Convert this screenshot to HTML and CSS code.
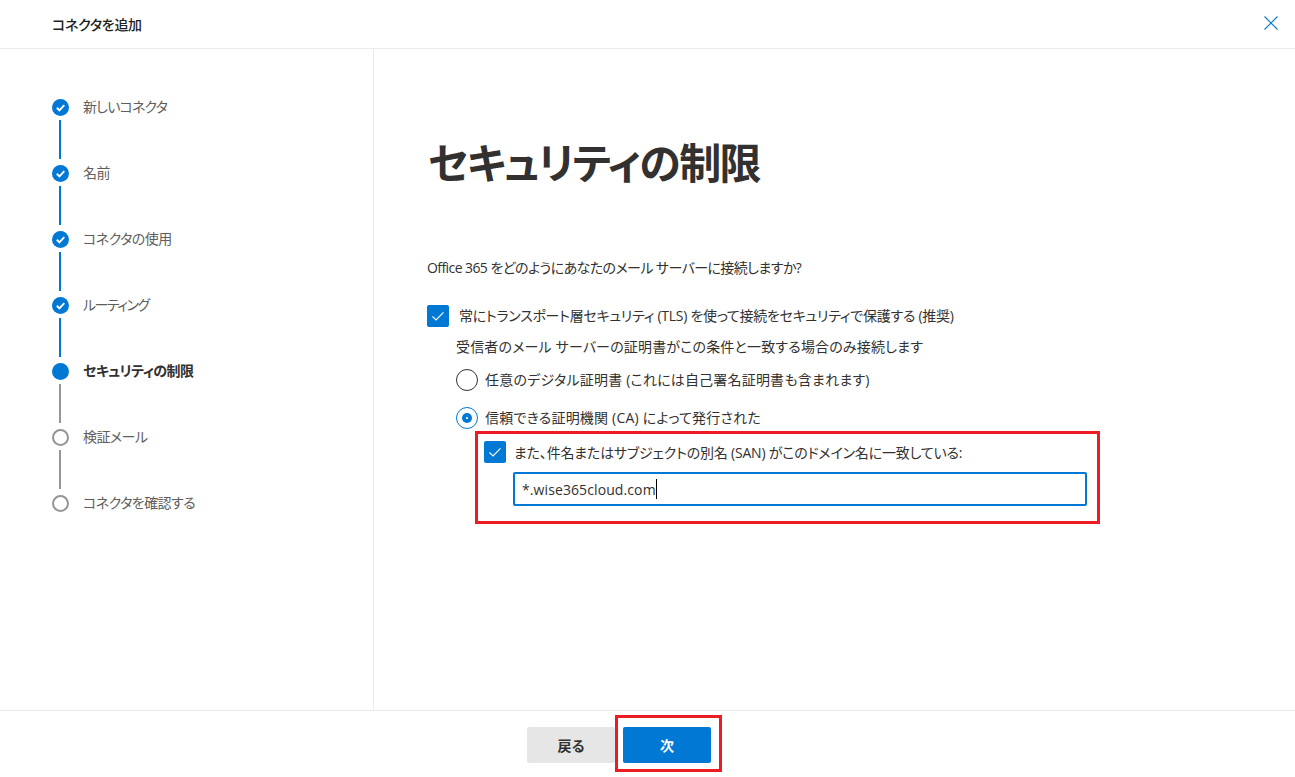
FILE: index.html
```html
<!DOCTYPE html>
<html lang="ja">
<head>
<meta charset="utf-8">
<title>コネクタを追加</title>
<link rel="stylesheet" href="styles.css">
</head>
<body>
<div class="app">
  <header class="header">
    <h1 class="header-title">コネクタを追加</h1>
    <button class="close" aria-label="閉じる">
      <svg width="16" height="16" viewBox="0 0 16 16"><path d="M1.5 1.5l13 13M14.5 1.5l-13 13" stroke="#0078d4" stroke-width="1.1" fill="none"/></svg>
    </button>
  </header>
  <div class="body">
    <nav class="steps">
      <div class="step done"><span class="node"><svg width="17" height="17" viewBox="0 0 17 17"><path d="M4.8 8.8l2.6 2.5 4.9-5.2" stroke="#fff" stroke-width="1.9" fill="none"/></svg></span><span class="label tight">新しいコネクタ</span></div>
      <div class="line done"></div>
      <div class="step done"><span class="node"><svg width="17" height="17" viewBox="0 0 17 17"><path d="M4.8 8.8l2.6 2.5 4.9-5.2" stroke="#fff" stroke-width="1.9" fill="none"/></svg></span><span class="label">名前</span></div>
      <div class="line done"></div>
      <div class="step done"><span class="node"><svg width="17" height="17" viewBox="0 0 17 17"><path d="M4.8 8.8l2.6 2.5 4.9-5.2" stroke="#fff" stroke-width="1.9" fill="none"/></svg></span><span class="label">コネクタの使用</span></div>
      <div class="line done"></div>
      <div class="step done"><span class="node"><svg width="17" height="17" viewBox="0 0 17 17"><path d="M4.8 8.8l2.6 2.5 4.9-5.2" stroke="#fff" stroke-width="1.9" fill="none"/></svg></span><span class="label tighter">ルーティング</span></div>
      <div class="line done"></div>
      <div class="step current"><span class="node"></span><span class="label">セキュリティの制限</span></div>
      <div class="line"></div>
      <div class="step"><span class="node"></span><span class="label">検証メール</span></div>
      <div class="line"></div>
      <div class="step"><span class="node"></span><span class="label">コネクタを確認する</span></div>
    </nav>
    <main class="main">
      <h2 class="title">セキュリティの制限</h2>
      <p class="question">Office 365 をどのようにあなたのメール サーバーに接続しますか?</p>
      <div class="check-row">
        <span class="checkbox"><svg width="22" height="22" viewBox="0 0 22 22"><path d="M5.5 11.5l3.6 3.5 7.4-7.6" stroke="#fff" stroke-width="1.2" fill="none"/></svg></span>
        <span class="text">常にトランスポート層セキュリティ (TLS) を使って接続をセキュリティで保護する (推奨)</span>
      </div>
      <div class="options">
        <p class="hint">受信者のメール サーバーの証明書がこの条件と一致する場合のみ接続します</p>
        <div class="radio-row"><span class="radio"></span><span class="text">任意のデジタル証明書 (これには自己署名証明書も含まれます)</span></div>
        <div class="radio-row"><span class="radio on"></span><span class="text">信頼できる証明機関 (CA) によって発行された</span></div>
      </div>
      <div class="san">
        <div class="san-row">
          <span class="checkbox"><svg width="22" height="22" viewBox="0 0 22 22"><path d="M5.5 11.5l3.6 3.5 7.4-7.6" stroke="#fff" stroke-width="1.2" fill="none"/></svg></span>
          <span class="text">また、件名またはサブジェクトの別名 (SAN) がこのドメイン名に一致している:</span>
        </div>
        <div class="input"><span>*.wise365cloud.com</span><span class="caret"></span></div>
      </div>
    </main>
  </div>
  <footer class="footer">
    <button class="btn back">戻る</button>
    <button class="btn next">次</button>
  </footer>
</div>
</body>
</html>
```
FILE: styles.css
```css
* { box-sizing: border-box; }
html, body { margin: 0; height: 100%; }
body {
  background: #fff;
  color: #323130;
  font-family: "Open Sans", "Noto Sans CJK JP", sans-serif;
  font-size: 14px;
  font-feature-settings: "palt";
}
.app { width: 1295px; height: 777px; display: flex; flex-direction: column; overflow: hidden; }
.header {
  height: 49px; flex: none;
  display: flex; align-items: center; justify-content: space-between;
  padding: 0 16px 0 52px;
  border-bottom: 1px solid #edebe9;
}
.header-title { margin: 0 0 1px; font-size: 14px; font-weight: 500; color: #201f1e; letter-spacing: -0.3px; }
.close { border: 0; background: none; padding: 0; width: 16px; height: 16px; display: flex; margin-top: -3px; }
.body { flex: 1; display: flex; min-height: 0; }
.steps {
  width: 374px; flex: none;
  border-right: 1px solid #edebe9;
  padding: 49px 0 0 52px;
  display: flex; flex-direction: column;
}
.step { display: flex; align-items: center; height: 18px; color: #605e5c; font-size: 14px; }
.node {
  width: 17px; height: 17px; border-radius: 50%; flex: none;
  border: 2px solid #979593; background: #fff;
}
.step.done .node { border: 0; background: #0078d4; display: block; }
.step.done .node svg { display: block; }
.step.current .node { border: 0; background: #0078d4; }
.step.current .label { font-weight: 600; color: #323130; }
.label { margin-left: 14px; padding-bottom: 2px; letter-spacing: -0.55px; }
.label.tight { letter-spacing: -0.85px; }
.label.tighter { letter-spacing: -1.5px; }
.line { width: 2px; height: 39px; margin: 4px 0 5px 7px; background: #979593; }
.line.done { background: #0078d4; }
.main { flex: 1; padding: 0 0 0 53px; }
.title { margin: 84px 0 0 1px; font-size: 42px; line-height: 60px; font-weight: 600; color: #323130; letter-spacing: -1.6px; }
.question { margin: 65px 0 0; line-height: 20px; color: #323130; letter-spacing: -0.58px; }
.check-row { display: flex; align-items: center; margin-top: 27px; height: 22px; }
.check-row .text { margin-left: 10px; letter-spacing: -0.28px; padding-bottom: 2px; }
.checkbox { width: 22px; height: 22px; border-radius: 2px; background: #0078d4; flex: none; display: block; }
.checkbox svg { display: block; }
.options { padding-left: 29px; }
.hint { margin: 10px 0 0; line-height: 20px; letter-spacing: 0.17px; }
.radio-row { display: flex; align-items: center; height: 22px; margin-top: 12px; }
.radio-row + .radio-row { margin-top: 16px; }
.radio-row .text { letter-spacing: 0.2px; padding-bottom: 2px; }
.radio { width: 22px; height: 22px; border-radius: 50%; border: 1.5px solid #323130; flex: none; margin-right: 7px; position: relative; }
.radio.on { border-color: #0078d4; }
.radio.on::after {
  content: ""; position: absolute; left: 4.5px; top: 4.5px; width: 10px; height: 10px; border-radius: 50%;
  background: radial-gradient(circle, #cfe4f7 0 1px, #0078d4 1.6px);
}
.san {
  width: 625px; height: 93px; margin: 2px 0 0 48px;
  border: 3px solid #ed1c24;
  padding: 7px 0 0 6px;
}
.san-row { display: flex; align-items: center; height: 22px; }
.san-row .text { margin-left: 8px; letter-spacing: -0.2px; }
.input {
  width: 574px; height: 34px; margin: 9px 0 0 29px;
  border: 2px solid #0078d4; border-radius: 2px;
  display: flex; align-items: center; padding-left: 7px; font-size: 14px; color: #323130; letter-spacing: 0.1px;
}
.caret { width: 1px; height: 20px; background: #000; }
.footer {
  height: 67px; flex: none;
  border-top: 1px solid #edebe9;
  padding: 16px 0 0 527px;
  display: flex; gap: 8px; align-items: flex-start;
}
.btn { width: 88px; height: 36px; border: 0; border-radius: 2px; font: inherit; font-weight: 600; font-size: 14px; }
.back { background: #e6e6e6; color: #323130; }
.next { background: #0078d4; color: #fff; position: relative; }
.next::after { content: ""; position: absolute; left: -8px; right: -11px; top: -12px; bottom: -9px; border: 3px solid #ed1c24; }
```
